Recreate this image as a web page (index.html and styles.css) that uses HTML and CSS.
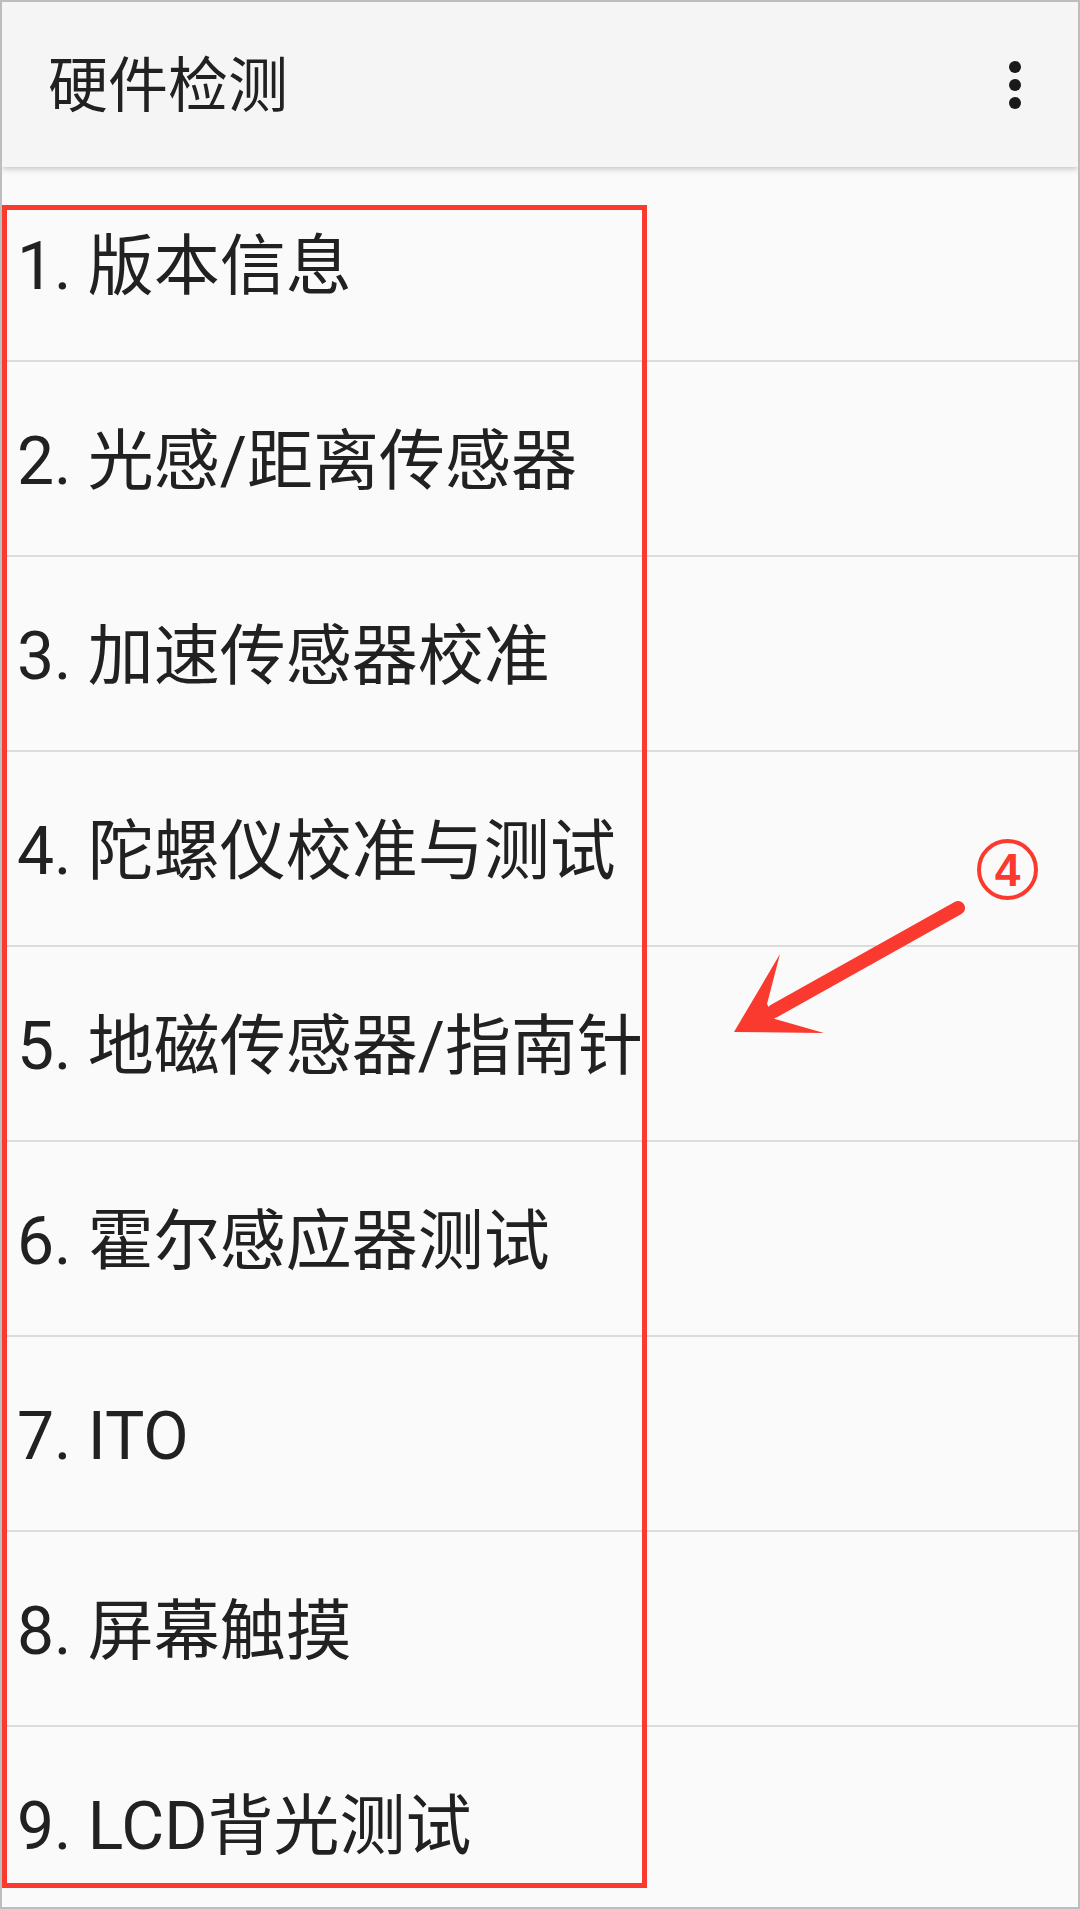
FILE: index.html
```html
<!DOCTYPE html>
<html lang="zh-CN">
<head>
<meta charset="utf-8">
<title>硬件检测</title>
<link rel="stylesheet" href="styles.css">
</head>
<body>
<div class="screen">
  <header class="appbar">
    <h1 class="title">硬件检测</h1>
    <div class="overflow" aria-label="更多选项">
      <span class="dot"></span><span class="dot"></span><span class="dot"></span>
    </div>
  </header>
  <ul class="list">
    <li class="row">1. 版本信息</li>
    <li class="row">2. 光感/距离传感器</li>
    <li class="row">3. 加速传感器校准</li>
    <li class="row">4. 陀螺仪校准与测试</li>
    <li class="row">5. 地磁传感器/指南针</li>
    <li class="row">6. 霍尔感应器测试</li>
    <li class="row">7. ITO</li>
    <li class="row">8. 屏幕触摸</li>
    <li class="row">9. LCD背光测试</li>
  </ul>
</div>

<div class="mark-box"></div>
<div class="mark-num">4</div>
<svg class="mark-arrow" width="280" height="170" viewBox="0 0 280 170" aria-hidden="true">
  <line x1="258" y1="28" x2="74" y2="131" stroke="#fb3a2f" stroke-width="14" stroke-linecap="round"/>
  <polygon points="34,152 80,74 67,124 75,139 124,153" fill="#fb3a2f"/>
</svg>
</body>
</html>
```
FILE: styles.css
```css
* { box-sizing: border-box; }

html, body {
  margin: 0;
  padding: 0;
}

body {
  position: relative;
  width: 1080px;
  height: 1909px;
  overflow: hidden;
  background: #fafafa;
  font-family: Roboto, "Noto Sans CJK SC", "Noto Sans", sans-serif;
  color: #212121;
}

.screen {
  width: 1080px;
  height: 1909px;
  border: 2px solid #bdbdbd;
  background: #fafafa;
  overflow: hidden;
  display: flex;
  flex-direction: column;
}

.appbar {
  position: relative;
  z-index: 1;
  flex: 0 0 165px;
  height: 165px;
  background: #f5f5f5;
  box-shadow: 0 2px 6px rgba(0, 0, 0, 0.22);
  display: flex;
  align-items: center;
  justify-content: space-between;
  padding: 0 57px 0 46px;
}

.title {
  margin: 0;
  padding-top: 4px;
  font-size: 60px;
  font-weight: 400;
  line-height: 1;
  color: #212121;
}

.overflow {
  display: flex;
  flex-direction: column;
  gap: 6px;
}

.dot {
  display: block;
  width: 12px;
  height: 12px;
  border-radius: 50%;
  background: #1a1a1a;
}

.list {
  list-style: none;
  margin: 0;
  padding: 0;
}

.row {
  height: 195px;
  border-bottom: 2px solid #dcdcdc;
  display: flex;
  align-items: center;
  padding: 7px 0 0 15px;
  font-size: 66px;
  line-height: 1;
  white-space: nowrap;
  color: #212121;
}

/* annotation overlays */
.mark-box {
  position: absolute;
  left: 2px;
  top: 205px;
  width: 645px;
  height: 1683px;
  border: 5px solid #fb3a2f;
}

.mark-num {
  position: absolute;
  left: 977px;
  top: 839px;
  width: 61px;
  height: 61px;
  border: 4px solid #fb3a2f;
  border-radius: 50%;
  display: flex;
  align-items: center;
  justify-content: center;
  font-family: "Liberation Sans", Arial, sans-serif;
  font-weight: 700;
  font-size: 46px;
  line-height: 1;
  color: #fb3a2f;
}

.mark-arrow {
  position: absolute;
  left: 700px;
  top: 880px;
}
```
